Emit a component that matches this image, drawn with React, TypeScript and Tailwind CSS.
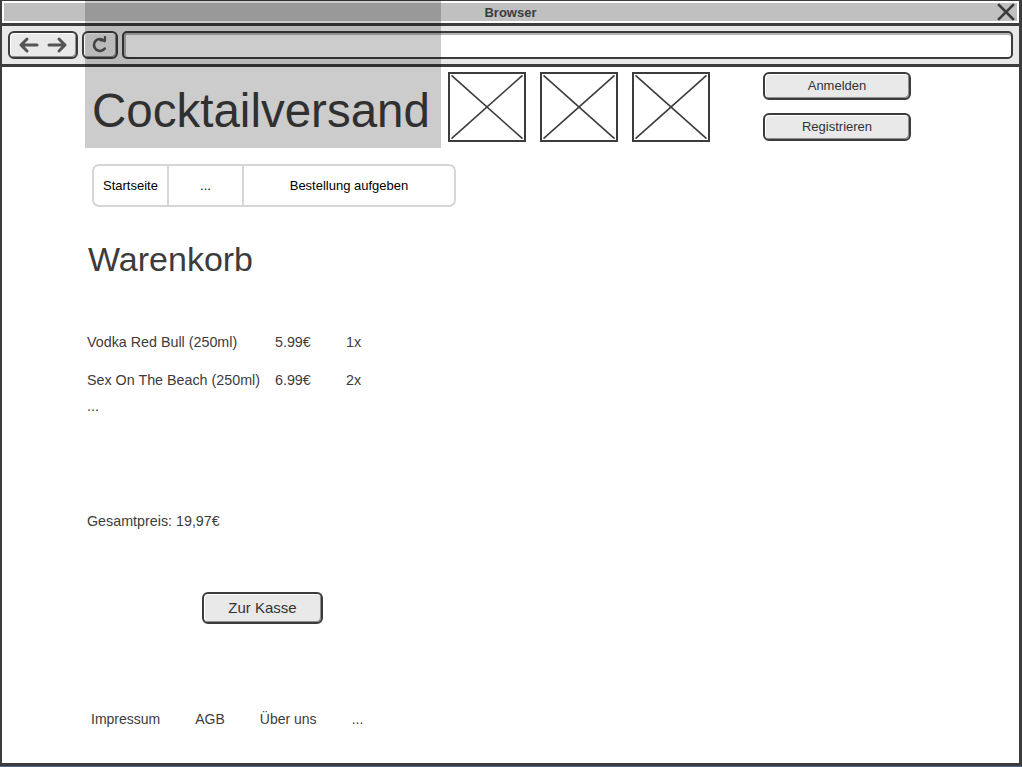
const btn =
  "flex items-center justify-center rounded-[6px] border-2 border-[#3c3c3c] bg-[#e9e9e9] text-[#333] shadow-[inset_1px_1px_0_#fff,inset_-1px_-1px_0_#8f8f8f]";

function Placeholder() {
  return (
    <div className="h-[70px] w-[78px] border-2 border-[#3c3c3c] bg-white">
      <svg className="h-full w-full" viewBox="0 0 100 100" preserveAspectRatio="none">
        <line x1="2" y1="2" x2="98" y2="98" stroke="#3c3c3c" strokeWidth="1.6" vectorEffect="non-scaling-stroke" />
        <line x1="98" y1="2" x2="2" y2="98" stroke="#3c3c3c" strokeWidth="1.6" vectorEffect="non-scaling-stroke" />
      </svg>
    </div>
  );
}

function Arrow({ dir }: { dir: "left" | "right" }) {
  const d = dir === "left" ? "M20 10 H4 M10 4 L4 10 L10 16" : "M2 10 H18 M12 4 L18 10 L12 16";
  return (
    <svg width="22" height="20" viewBox="0 0 22 20">
      <path d={d} fill="none" stroke="#555" strokeWidth="3" strokeLinecap="round" strokeLinejoin="round" />
    </svg>
  );
}

export default function App() {
  return (
    <div className="relative h-[767px] w-[1022px] overflow-hidden bg-[#4d6a8c] font-['Liberation_Sans',Arial,sans-serif]">
      <div className="flex h-[766px] flex-col border-b-[3px] border-l-2 border-r-[3px] border-t border-[#3c3c3c] bg-white">
        {/* title bar */}
        <div className="h-[22px] bg-white p-[2px]">
          <div className="relative flex h-full items-center justify-center bg-[#c0c0c0] pt-[1px]">
            <span className="text-[13px] font-bold text-[#3c3c3c]">Browser</span>
            <svg className="absolute right-[2px] top-0" width="18" height="18" viewBox="0 0 18 18">
              <path d="M2 2 L16 16 M16 2 L2 16" stroke="#3c3c3c" strokeWidth="2.6" strokeLinecap="square" />
            </svg>
          </div>
        </div>
        <div className="h-[3px] bg-[#3c3c3c]" />

        {/* toolbar */}
        <div className="flex h-[38px] items-start gap-[4px] bg-[#e8e8e8] pl-[6px] pr-[6px] pt-[5px]">
          <div className={btn + " h-[28px] w-[70px] gap-[8px]"}>
            <Arrow dir="left" />
            <Arrow dir="right" />
          </div>
          <div className={btn + " h-[28px] w-[36px]"}>
            <svg width="18" height="18" viewBox="0 0 18 18">
              <path d="M13.5 5 A6 6 0 1 0 13.8 12.5" fill="none" stroke="#555" strokeWidth="2.6" strokeLinecap="round" />
              <path d="M9.5 4.5 L14 4.5 L14 1" fill="none" stroke="#555" strokeWidth="2.2" strokeLinecap="round" strokeLinejoin="round" />
            </svg>
          </div>
          <div className="h-[28px] flex-1 rounded-[5px] border-2 border-[#3c3c3c] bg-white shadow-[inset_0_2px_0_#b5b5b5,inset_2px_0_0_#b5b5b5]" />
        </div>
        <div className="h-[3px] bg-[#3c3c3c]" />

        {/* page content */}
        <div className="flex flex-1 flex-col pl-[83px] text-[#3c3c3c]">
          <div className="flex items-start">
            <div className="flex h-[81px] w-[356px] items-center pl-[7px] pt-[6px] text-[47.5px] leading-none">
              Cocktailversand
            </div>
            <div className="ml-[7px] mt-[5px] flex gap-[14px]">
              <Placeholder />
              <Placeholder />
              <Placeholder />
            </div>
            <div className="ml-[53px] mt-[5px] flex flex-col gap-[13px] text-[13px]">
              <div className={btn + " h-[28px] w-[148px]"}>Anmelden</div>
              <div className={btn + " h-[28px] w-[148px]"}>Registrieren</div>
            </div>
          </div>

          <div className="ml-[7px] mt-[16px] flex h-[43px] w-[364px] rounded-[7px] border-2 border-[#d6d6d6] text-[13px] text-black">
            <div className="flex w-[75px] items-center justify-center border-r-2 border-[#d6d6d6]">Startseite</div>
            <div className="flex w-[75px] items-center justify-center border-r-2 border-[#d6d6d6]">...</div>
            <div className="flex flex-1 items-center justify-center">Bestellung aufgeben</div>
          </div>

          <h1 className="ml-[3px] mt-[35px] text-[34px] leading-none">Warenkorb</h1>

          <div className="ml-[2px] mt-[56px] flex flex-col gap-[18px] text-[14.3px] leading-[20px]">
            <div className="flex">
              <span className="w-[188px]">Vodka Red Bull (250ml)</span>
              <span className="w-[71px]">5.99€</span>
              <span>1x</span>
            </div>
            <div className="flex">
              <span className="w-[188px]">Sex On The Beach (250ml)</span>
              <span className="w-[71px]">6.99€</span>
              <span>2x</span>
            </div>
          </div>
          <div className="ml-[2px] mt-[6px] text-[14.3px] leading-[20px]">...</div>

          <div className="ml-[2px] mt-[95px] text-[14.3px] leading-[20px]">Gesamtpreis: 19,97€</div>

          <div className={btn + " ml-[117px] mt-[61px] h-[32px] w-[121px] text-[15px]"}>Zur Kasse</div>

          <div className="ml-[6px] mt-[85px] flex gap-[35px] text-[14px] leading-[20px]">
            <span>Impressum</span>
            <span>AGB</span>
            <span>Über uns</span>
            <span>...</span>
          </div>
        </div>
      </div>

      {/* translucent label background over the chrome */}
      <div className="pointer-events-none absolute left-[85px] top-0 h-[148px] w-[356px] bg-black/20" />
    </div>
  );
}
